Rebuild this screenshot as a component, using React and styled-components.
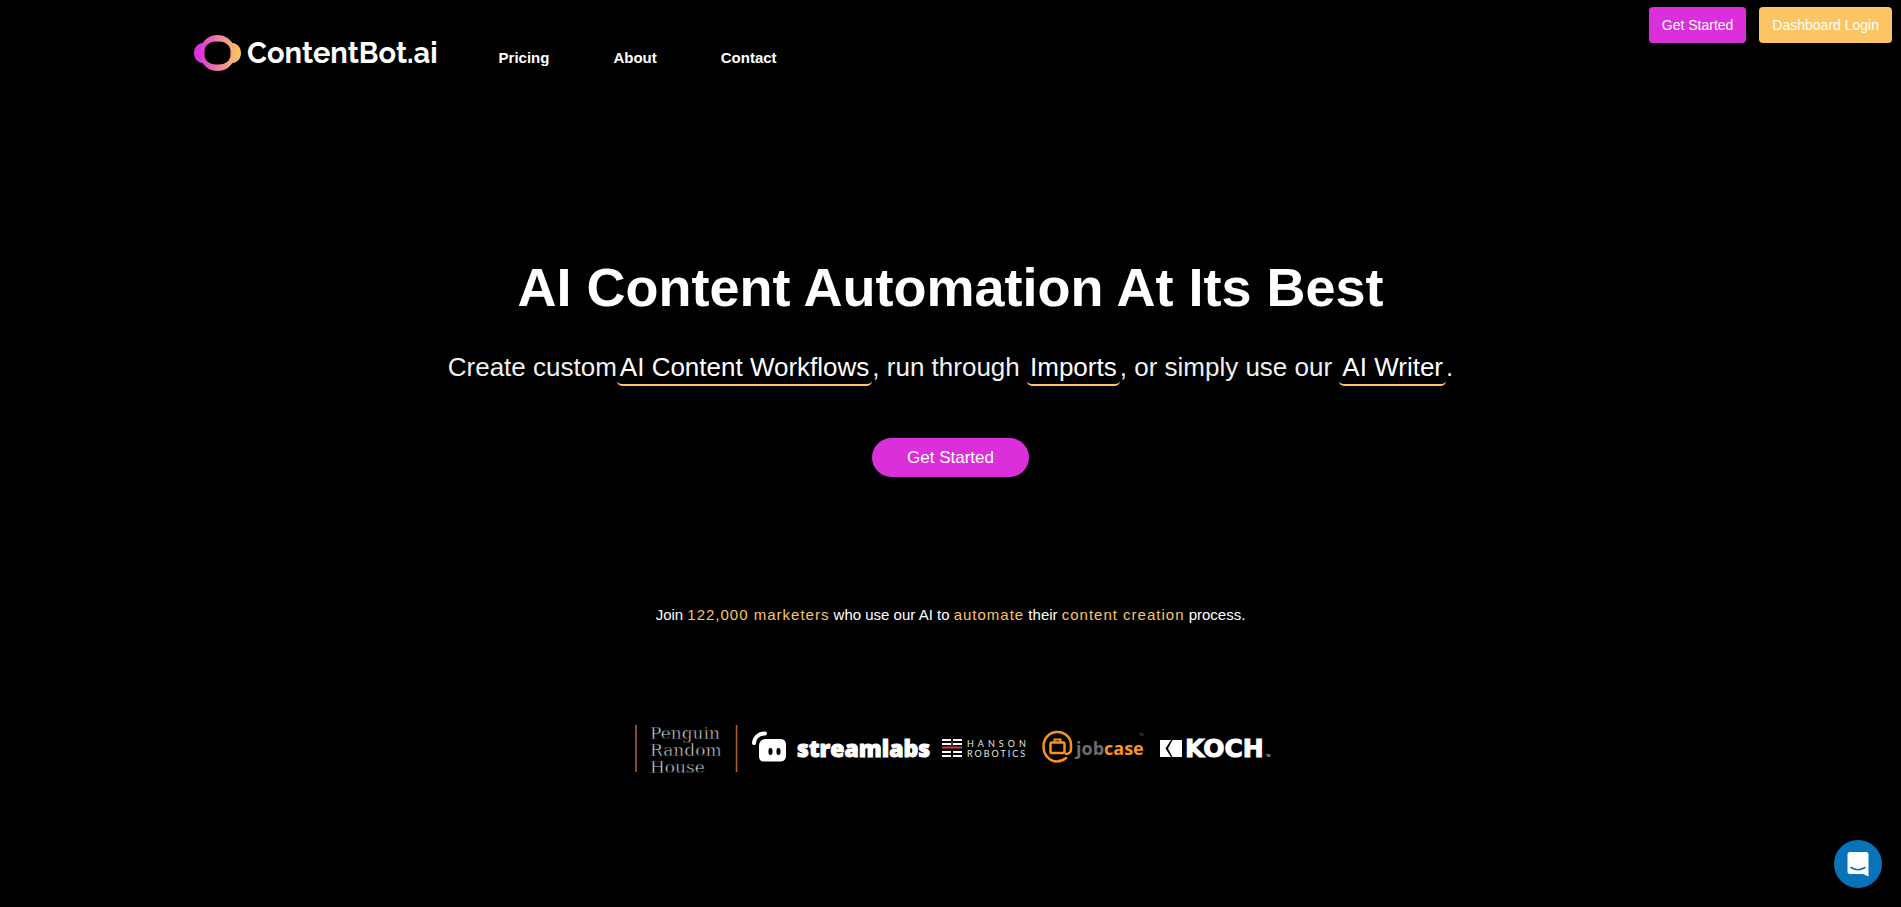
import React from 'react';
import styled, { createGlobalStyle } from 'styled-components';

const colors = {
  pink: '#dc2fdc',
  gold: '#fbc564',
  white: '#ffffff',
};

const GlobalStyle = createGlobalStyle`
  *, *::before, *::after { box-sizing: border-box; }
  body {
    margin: 0;
    background: #000;
    color: ${colors.white};
    font-family: Arial, 'Liberation Sans', sans-serif;
  }
`;

const Header = styled.header`
  display: flex;
  align-items: flex-start;
  padding: 7px 9px 0 calc(10% + 4px);
`;

const Brand = styled.a`
  display: flex;
  align-items: center;
  gap: 6px;
  margin-top: 28px;
  height: 36px;
  color: ${colors.white};
  font-family: Raleway, Lato, sans-serif;
  font-size: 29px;
  font-weight: 700;
  line-height: 36px;
  text-decoration: none;
`;

const Nav = styled.nav`
  display: flex;
  gap: 64px;
  margin: 40px 0 0 61px;
`;

const NavLink = styled.a`
  color: ${colors.white};
  font-size: 15px;
  font-weight: 700;
  line-height: 22px;
  text-decoration: none;
`;

const Actions = styled.div`
  display: flex;
  gap: 13px;
  margin-left: auto;
`;

const ActionButton = styled.button`
  height: 36px;
  padding: 0 13px;
  border: 0;
  border-radius: 4px;
  background: ${(p) => p.$color};
  color: ${colors.white};
  font: 14px/20px Arial, 'Liberation Sans', sans-serif;
  cursor: pointer;
`;

const Hero = styled.main`
  display: flex;
  flex-direction: column;
  align-items: center;
  padding: 184px 24px 80px;
  text-align: center;
`;

const Title = styled.h1`
  margin: 0;
  font-size: 54px;
  font-weight: 700;
  line-height: 64px;
`;

const Lead = styled.p`
  margin: 28px 0 0;
  color: #f0f0f0;
  font-size: 26px;
  line-height: 40px;
`;

const LeadLink = styled.a`
  padding: 0 3px 2px;
  border-bottom: 2px solid ${colors.gold};
  border-radius: 5px;
  color: ${colors.white};
  text-decoration: none;
`;

const StartButton = styled.button`
  height: 39px;
  margin-top: 51px;
  padding: 0 35px;
  border: 0;
  border-radius: 20px;
  background: ${colors.pink};
  color: ${colors.white};
  font: 17px/24px Arial, 'Liberation Sans', sans-serif;
  cursor: pointer;
`;

const Social = styled.p`
  margin: 126px 0 0;
  font-size: 15px;
  line-height: 24px;
`;

const Accent = styled.span`
  color: ${colors.gold};
  letter-spacing: 1px;
`;

const Logos = styled.div`
  display: flex;
  flex-wrap: wrap;
  align-items: center;
  justify-content: center;
  gap: 14px;
  margin-top: 97px;

  svg {
    display: block;
    overflow: visible;
  }
`;

const ChatButton = styled.button`
  position: fixed;
  right: 19px;
  bottom: 19px;
  display: flex;
  align-items: center;
  justify-content: center;
  width: 48px;
  height: 48px;
  padding: 0;
  border: 0;
  border-radius: 50%;
  background: #0873b8;
  cursor: pointer;
`;

function BrandMark() {
  return (
    <svg width="47" height="36" viewBox="0 0 47 36" aria-hidden="true">
      <defs>
        <linearGradient id="brand" x1="0" x2="1" y1="0" y2="0">
          <stop offset="0.1" stopColor="#dc2fe0" />
          <stop offset="0.5" stopColor="#ea7fa8" />
          <stop offset="0.95" stopColor="#fbc35f" />
        </linearGradient>
      </defs>
      <path
        fill="url(#brand)"
        fillRule="evenodd"
        d="M23.500 0C30 0 35 3 38.500 8C43.500 8.500 47 12.500 47 18S43.500 27.500 38.500 28C35 33 30 36 23.500 36S12 33 8.500 28C3.500 27.500 0 23.500 0 18S3.500 8.500 8.500 8C12 3 17 0 23.500 0ZM22 6.500C15 6.500 10.500 11 10.500 16V20C10.500 25 15 29.500 22 29.500H25C32 29.500 36.500 25 36.500 20V16C36.500 11 32 6.500 25 6.500Z"
      />
    </svg>
  );
}

function PenguinLogo() {
  return (
    <svg width="103" height="52" viewBox="0 0 103 52" role="img" aria-label="Penguin Random House">
      <path d="M1 1V48M101.500 1V48" stroke="#b5622a" strokeWidth="1.500" />
      <g fill="#ececec" stroke="#000" strokeWidth="0.6" fontFamily="'DejaVu Serif', serif" fontSize="17">
        <text x="15" y="15">Penguin</text>
        <text x="15" y="32">Random</text>
        <text x="15" y="49">House</text>
      </g>
    </svg>
  );
}

function StreamlabsLogo() {
  return (
    <svg width="176" height="52" viewBox="0 0 176 52" role="img" aria-label="streamlabs">
      <path d="M2 19C2.500 13 7 9.500 13 9.500" fill="none" stroke="#fff" strokeWidth="4" strokeLinecap="round" />
      <path
        fill="#fff"
        fillRule="evenodd"
        d="M14 15H28C32 15 34 17 34 21V31C34 35.500 32 37.500 28 37.500H12C8.500 37.500 7 35.500 7 32V22C7 17.500 9.500 15 14 15ZM18.500 24A2 2 0 0 0 16.500 26V29A2 2 0 0 0 20.500 29V26A2 2 0 0 0 18.500 24ZM26.500 24A2 2 0 0 0 24.500 26V29A2 2 0 0 0 28.500 29V26A2 2 0 0 0 26.500 24Z"
      />
      <text x="45" y="33" fill="#fff" stroke="#fff" strokeWidth="1" strokeLinejoin="round" fontFamily="'Open Sans', sans-serif" fontWeight="800" fontSize="23">
        streamlabs
      </text>
    </svg>
  );
}

function HansonLogo() {
  const rows = [0, 4, 12, 16];
  return (
    <svg width="86" height="52" viewBox="0 0 86 52" role="img" aria-label="Hanson Robotics">
      {rows.map((y) => (
        <path key={y} d={`M0 ${y + 16}H9M11 ${y + 16}H20`} stroke="#fff" strokeWidth="2" />
      ))}
      <path d="M0 23.500H20" stroke="#c8404a" strokeWidth="2" />
      <path d="M10 17V22" stroke="#c8404a" strokeWidth="1" />
      <g fill="#e6e6e6" fontFamily="Lato, sans-serif" fontSize="9">
        <text x="25" y="23" letterSpacing="4">HANSON</text>
        <text x="25" y="33" letterSpacing="2">ROBOTICS</text>
      </g>
    </svg>
  );
}

function JobcaseLogo() {
  return (
    <svg width="104" height="52" viewBox="0 0 104 52" role="img" aria-label="jobcase">
      <g fill="none" stroke="#f7941d" strokeLinecap="round">
        <path d="M24 34C21 36.500 18 37.500 15 37.500C7.500 37.500 1.500 31 1.500 22.500S7.500 8 15.500 8S29 14 29 21V25C29 28 27 30 24 30" strokeWidth="2.500" />
        <rect x="8.500" y="18.500" width="14" height="10.500" rx="1" strokeWidth="2.500" />
        <path d="M12.500 18V15.500H18.500V18" strokeWidth="2" />
      </g>
      <text x="34" y="31" fontFamily="'Open Sans', sans-serif" fontWeight="700" fontSize="18">
        <tspan fill="#6b6b70">job</tspan>
        <tspan fill="#f7941d">case</tspan>
      </text>
      <text x="97" y="12" fill="#777" fontFamily="'Liberation Sans', sans-serif" fontSize="3">TM</text>
    </svg>
  );
}

function KochLogo() {
  return (
    <svg width="106" height="52" viewBox="0 0 106 52" role="img" aria-label="Koch">
      <path fill="#fff" d="M0 16H11L5.500 24.500L11 33H0ZM12.500 16H22V33H12.500L8 24.500Z" />
      <text x="25" y="33" fill="#fff" stroke="#fff" strokeWidth="1" fontFamily="'DejaVu Sans', sans-serif" fontWeight="700" fontSize="25">
        KOCH
      </text>
      <text x="106" y="33" fill="#fff" fontFamily="'Liberation Sans', sans-serif" fontSize="3">TM</text>
    </svg>
  );
}

export default function App() {
  return (
    <>
      <GlobalStyle />
      <Header>
        <Brand href="#">
          <BrandMark />
          ContentBot.ai
        </Brand>
        <Nav>
          <NavLink href="#pricing">Pricing</NavLink>
          <NavLink href="#about">About</NavLink>
          <NavLink href="#contact">Contact</NavLink>
        </Nav>
        <Actions>
          <ActionButton $color={colors.pink}>Get Started</ActionButton>
          <ActionButton $color={colors.gold}>Dashboard Login</ActionButton>
        </Actions>
      </Header>
      <Hero>
        <Title>AI Content Automation At Its Best</Title>
        <Lead>
          Create custom<LeadLink href="#workflows">AI Content Workflows</LeadLink>, run through{' '}
          <LeadLink href="#imports">Imports</LeadLink>, or simply use our{' '}
          <LeadLink href="#writer">AI Writer</LeadLink>.
        </Lead>
        <StartButton>Get Started</StartButton>
        <Social>
          Join <Accent>122,000 marketers</Accent> who use our AI to <Accent>automate</Accent> their{' '}
          <Accent>content creation</Accent> process.
        </Social>
        <Logos>
          <PenguinLogo />
          <StreamlabsLogo />
          <HansonLogo />
          <JobcaseLogo />
          <KochLogo />
        </Logos>
      </Hero>
      <ChatButton aria-label="Open chat">
        <svg width="22" height="25" viewBox="0 0 22 25" aria-hidden="true">
          <path fill="#fff" d="M3 0H19Q21.500 0 21.500 2.500V24.500L16 22H3Q0.500 22 0.500 19.500V2.500Q0.500 0 3 0Z" />
          <path d="M4 15.500Q11 20 18 15.500" fill="none" stroke="#0873b8" strokeWidth="1.500" strokeLinecap="round" />
        </svg>
      </ChatButton>
    </>
  );
}
